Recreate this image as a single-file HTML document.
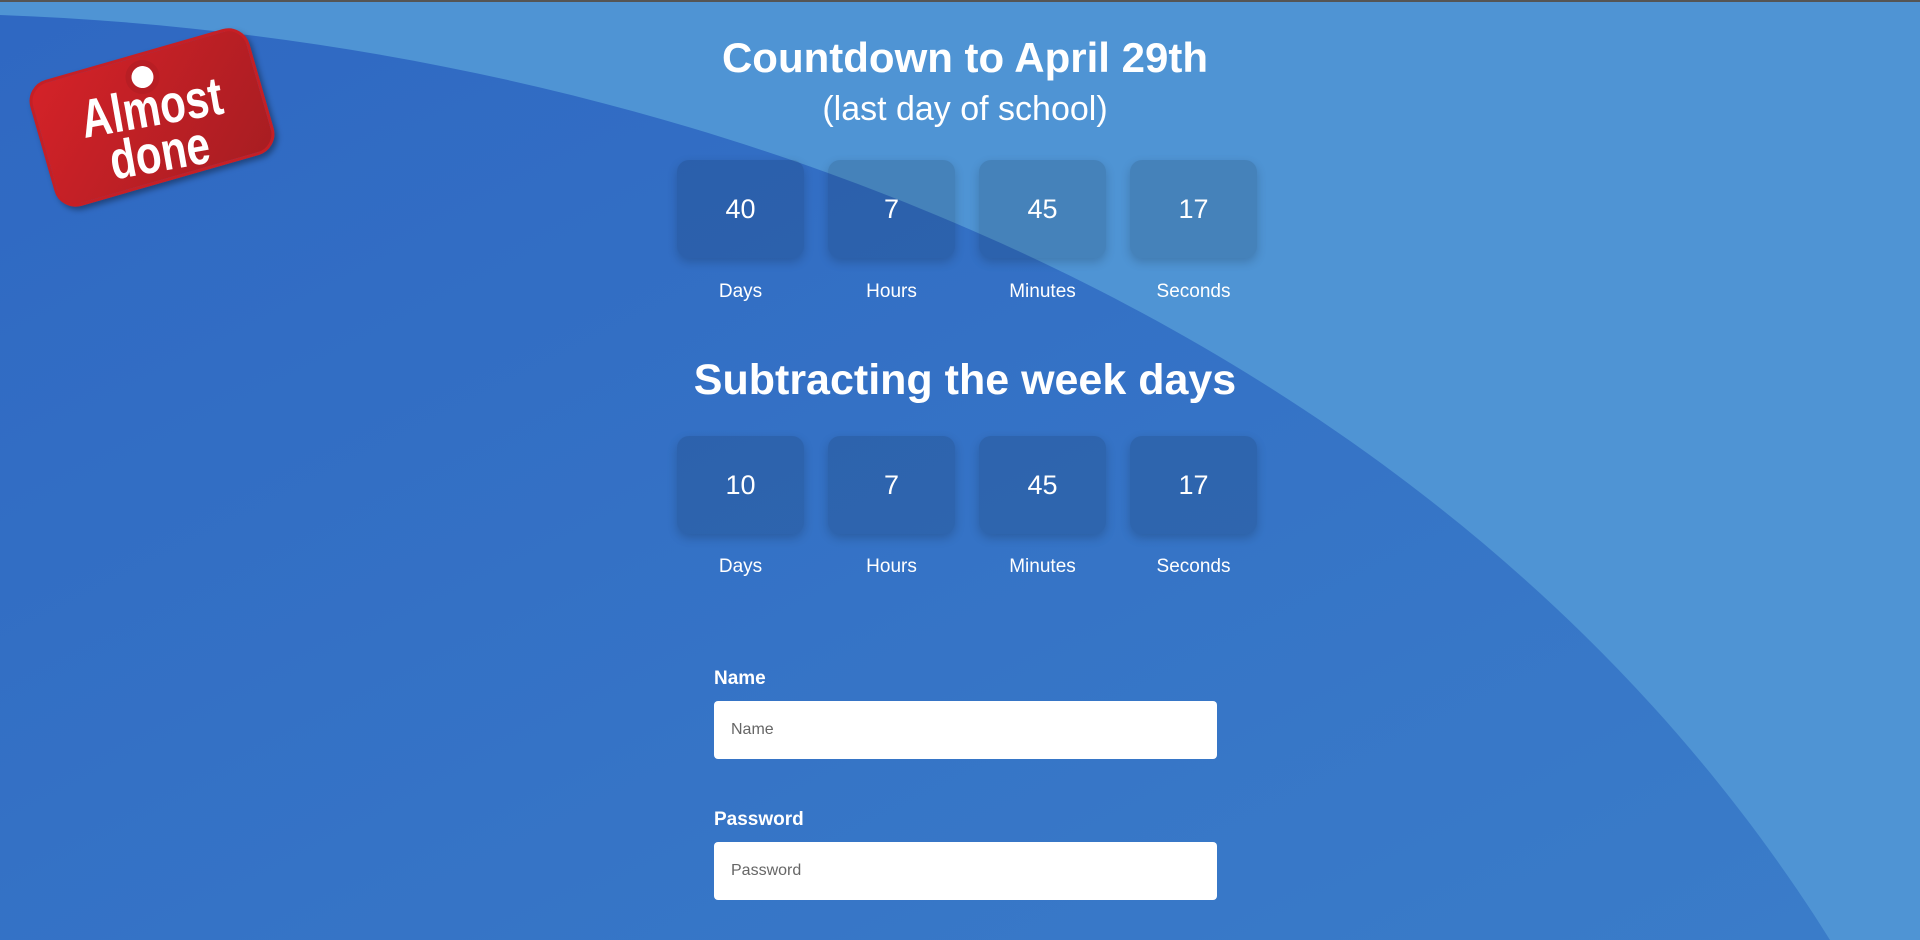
<!DOCTYPE html>
<html><head><meta charset="utf-8"><style>
html,body{margin:0;padding:0;}
body{width:1920px;height:938px;overflow:hidden;position:relative;background:#4f94d4;font-family:"Liberation Sans",sans-serif;color:#fff;border-top:2px solid #555;box-sizing:border-box;}
svg.bg{position:absolute;left:0;top:0;}
.c{position:absolute;left:0;width:1930px;text-align:center;}
h1{margin:0;font-weight:bold;font-size:42px;}
.row{position:absolute;left:677px;display:flex;gap:24px;}
.box{width:127px;height:98px;border-radius:12px;background:rgba(0,0,0,0.12);box-shadow:0 4px 10px rgba(0,0,0,0.18);display:flex;align-items:center;justify-content:center;font-size:27px;}
.lab{position:absolute;left:677px;display:flex;gap:24px;}
.lab div{width:127px;text-align:center;font-size:19px;}
.fl{position:absolute;left:714px;font-size:19px;font-weight:bold;}
.in{position:absolute;left:714px;width:503px;height:58px;background:#fff;border-radius:4px;color:#666;font-size:16px;line-height:58px;padding-left:17px;box-sizing:border-box;}
.tag{position:absolute;left:38px;top:50px;width:222px;height:125px;border-radius:22px;background:linear-gradient(135deg,#d42228,#a81d22);border:3px solid #c61f25;transform:rotate(-16deg);box-shadow:2px 4px 6px rgba(0,0,0,0.35);}
.tag .hole{position:absolute;left:102px;top:10px;width:22px;height:22px;border-radius:50%;background:#fff;box-shadow:0 0 0 6px #b81e24;}
.tag .t{position:absolute;left:0;right:0;top:30px;text-align:center;font-weight:bold;font-size:54px;line-height:46px;transform:rotate(6deg) scaleX(0.78);}
</style></head><body>
<svg class="bg" width="1920" height="938"><defs><linearGradient id="g" x1="0" y1="0" x2="1" y2="1"><stop offset="0" stop-color="#2f68c2"/><stop offset="1" stop-color="#3a7cc9"/></linearGradient></defs><path d="M0,13 C700,38 1450,330 1830,938 L0,938 Z" fill="url(#g)"/></svg>
<div class="tag"><div class="hole"></div><div class="t">Almost<br>done</div></div>
<div class="c" style="top:32px"><h1>Countdown to April 29th</h1></div>
<div class="c" style="top:88px;font-size:34px">(last day of school)</div>
<div class="row" style="top:158px"><div class="box">40</div><div class="box">7</div><div class="box">45</div><div class="box">17</div></div>
<div class="lab" style="top:279px"><div>Days</div><div>Hours</div><div>Minutes</div><div>Seconds</div></div>
<div class="c" style="top:354px"><h1 style="font-size:43px">Subtracting the week days</h1></div>
<div class="row" style="top:434px"><div class="box">10</div><div class="box">7</div><div class="box">45</div><div class="box">17</div></div>
<div class="lab" style="top:554px"><div>Days</div><div>Hours</div><div>Minutes</div><div>Seconds</div></div>
<div class="fl" style="top:666px">Name</div>
<div class="in" style="top:699px">Name</div>
<div class="fl" style="top:807px">Password</div>
<div class="in" style="top:840px">Password</div>
</body></html>
